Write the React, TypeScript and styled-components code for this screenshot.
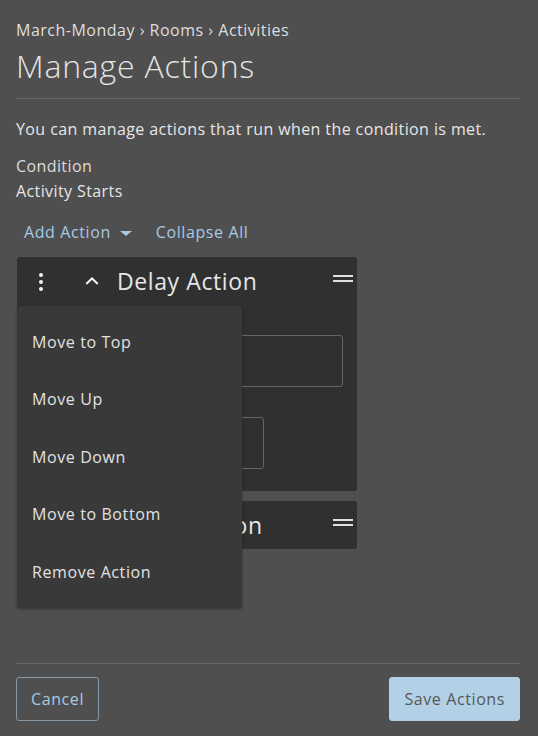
import React from 'react';
import styled, { createGlobalStyle } from 'styled-components';

// ----------------------------------------------------------------------

const GlobalStyle = createGlobalStyle`
  html, body {
    margin: 0;
    padding: 0;
    background: #4f4f4f;
  }
  * {
    box-sizing: border-box;
  }
  body {
    font-family: 'Open Sans', 'Liberation Sans', sans-serif;
    letter-spacing: 0.4px;
    color: #e6e6e6;
  }
`;

const menuItems = ['Move to Top', 'Move Up', 'Move Down', 'Move to Bottom', 'Remove Action'];

// ----------------------------------------------------------------------

const App: React.FC = () => {
  return (
    <Page>
      <GlobalStyle />
      <Breadcrumb>March-Monday › Rooms › Activities</Breadcrumb>
      <Title>Manage Actions</Title>
      <Rule />
      <Lead>You can manage actions that run when the condition is met.</Lead>
      <Label>Condition</Label>
      <Value>Activity Starts</Value>

      <LinkRow>
        <LinkButton>
          Add Action
          <Caret />
        </LinkButton>
        <LinkButton>Collapse All</LinkButton>
      </LinkRow>

      <Cards>
        <Card>
          <CardHeader>
            <Kebab>
              <i />
              <i />
              <i />
            </Kebab>
            <Chevron viewBox="0 0 14 8" width="14" height="8">
              <path d="M1.2 7 L7 1.5 L12.8 7" fill="none" stroke="#f2f2f2" strokeWidth="2" />
            </Chevron>
            <CardTitle>Delay Action</CardTitle>
            <Handle />
          </CardHeader>
          <CardBody>
            <Input width={312} />
            <Input width={233} />
          </CardBody>

          <Menu>
            {menuItems.map((item) => (
              <MenuItem key={item}>{item}</MenuItem>
            ))}
          </Menu>
        </Card>

        <Card>
          <CardHeader>
            <Kebab>
              <i />
              <i />
              <i />
            </Kebab>
            <Chevron viewBox="0 0 14 8" width="14" height="8">
              <path d="M1.2 1 L7 6.5 L12.8 1" fill="none" stroke="#f2f2f2" strokeWidth="2" />
            </Chevron>
            <CardTitle>Notify Action</CardTitle>
            <Handle />
          </CardHeader>
        </Card>
      </Cards>

      <Footer>
        <Rule />
        <FooterRow>
          <Button variant="outline">Cancel</Button>
          <Button variant="solid">Save Actions</Button>
        </FooterRow>
      </Footer>
    </Page>
  );
};

// ----------------------------------------------------------------------

const Page = styled.div`
  display: flex;
  flex-direction: column;
  min-height: 100vh;
  padding: 18px 18px 15px 16px;
`;

const Breadcrumb = styled.div`
  font-size: 16px;
  line-height: 24px;
  letter-spacing: 0.5px;
  color: #dedede;
`;

const Title = styled.h1`
  margin: 4px 0 0 0;
  font-size: 32px;
  font-weight: 300;
  line-height: 40px;
  color: #e4e4e4;
  letter-spacing: 0.8px;
`;

const Rule = styled.hr`
  margin: 12px 0 0 0;
  border: 0;
  height: 1px;
  background: #676767;
`;

const Lead = styled.p`
  margin: 18px 0 0 0;
  font-size: 16px;
  line-height: 24px;
`;

const Label = styled.div`
  margin-top: 13px;
  font-size: 16px;
  line-height: 24px;
  color: #dcdcdc;
`;

const Value = styled.div`
  margin-top: 1px;
  font-size: 16px;
  line-height: 24px;
`;

const LinkRow = styled.div`
  display: flex;
  gap: 24px;
  margin-top: 17px;
  padding-left: 8px;
`;

const LinkButton = styled.span`
  display: inline-flex;
  align-items: center;
  gap: 9px;
  font-size: 16px;
  line-height: 24px;
  letter-spacing: 0.6px;
  color: #a6cae6;
`;

const Caret = styled.span`
  width: 0;
  height: 0;
  border-left: 6px solid transparent;
  border-right: 6px solid transparent;
  border-top: 5px solid #a6cae6;
  margin-top: 2px;
`;

const Cards = styled.div`
  display: flex;
  flex-direction: column;
  gap: 10px;
  margin-top: 13px;
  margin-left: 1px;
  width: 340px;
`;

const Card = styled.div`
  position: relative;
  background: #303030;
  border-radius: 3px;
`;

const CardHeader = styled.div`
  display: flex;
  align-items: center;
  height: 48px;
  padding: 0 4px 0 22px;
`;

const Kebab = styled.span`
  display: flex;
  flex-direction: column;
  align-items: center;
  gap: 3px;
  width: 4px;
  margin-top: 1px;

  i {
    width: 4px;
    height: 4px;
    border-radius: 50%;
    background: #f2f2f2;
  }
`;

const Chevron = styled.svg`
  margin-left: 42px;
`;

const CardTitle = styled.span`
  margin-left: 18px;
  font-size: 23px;
  font-weight: 400;
  letter-spacing: 0.6px;
  color: #e6e6e6;
  flex: 1;
`;

const Handle = styled.span`
  align-self: flex-start;
  margin-top: 18px;
  width: 20px;
  height: 7px;
  border-top: 2px solid #e0e0e0;
  border-bottom: 2px solid #e0e0e0;
`;

const CardBody = styled.div`
  display: flex;
  flex-direction: column;
  gap: 30px;
  padding: 30px 0 22px 14px;
`;

const Input = styled.div<{ width: number }>`
  width: ${(p) => p.width}px;
  height: 52px;
  border: 1px solid #666;
  border-radius: 3px;
`;

const Menu = styled.div`
  position: absolute;
  top: 49px;
  left: 0;
  width: 225px;
  padding: 7px 0;
  background: #393939;
  border-radius: 3px;
  box-shadow: 0 1px 3px rgba(0, 0, 0, 0.35);
  z-index: 2;
`;

const MenuItem = styled.div`
  display: flex;
  align-items: center;
  height: 57.5px;
  padding-left: 15px;
  font-size: 16px;
  letter-spacing: 0.6px;
  color: #e2e2e2;
`;

const Footer = styled.div`
  margin-top: auto;
`;

const FooterRow = styled.div`
  display: flex;
  justify-content: space-between;
  margin-top: 13px;
`;

const Button = styled.button<{ variant: 'outline' | 'solid' }>`
  height: 44px;
  padding: 0 14px;
  border-radius: 3px;
  font-family: 'Open Sans', 'Liberation Sans', sans-serif;
  font-size: 16px;
  letter-spacing: 0.6px;
  border: 1px solid ${(p) => (p.variant === 'solid' ? '#b2d1e6' : '#8797a4')};
  background: ${(p) => (p.variant === 'solid' ? '#b2d1e6' : 'transparent')};
  color: ${(p) => (p.variant === 'solid' ? '#575757' : '#a9c9e0')};
`;

// ----------------------------------------------------------------------

export default App;
